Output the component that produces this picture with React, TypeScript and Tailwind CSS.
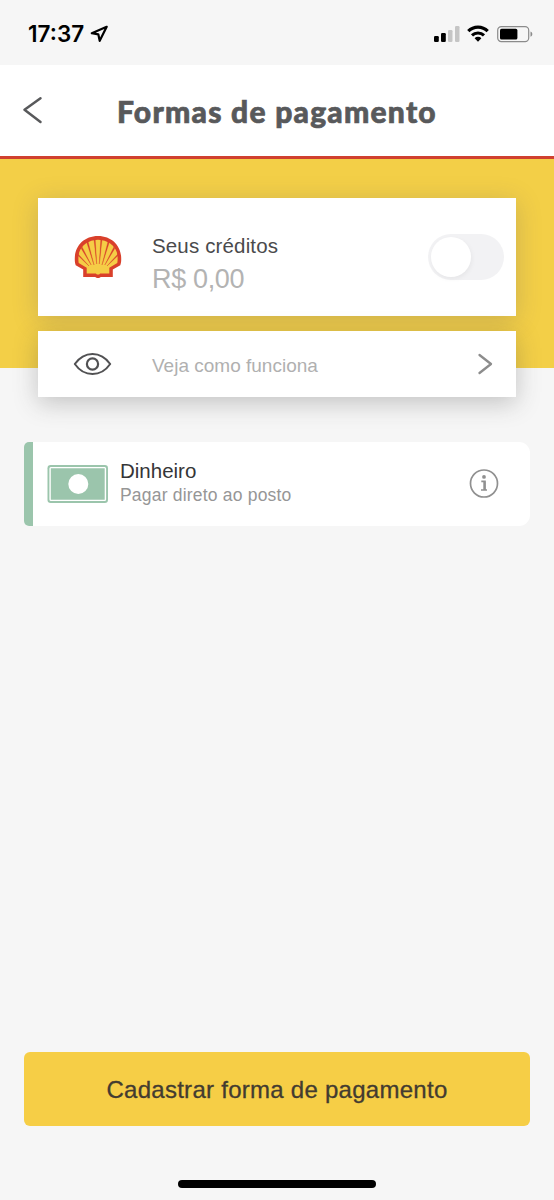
import React, { useState } from 'react';

const StatusBar: React.FC = () => (
  <div className="flex h-[65px] shrink-0 items-start bg-[#f6f6f6] pl-[28px] pr-[21px] pt-[22px] text-black">
    <span className="w-[58px] whitespace-nowrap font-['Inter',sans-serif] text-[22.5px] font-semibold leading-6">
      17:37
    </span>
    <svg className="ml-[4px] mt-[3px] h-[18px] w-[19px]" viewBox="0 0 19 18" fill="none">
      <path d="M16.7 1.8 1.8 8.2 8.3 9.3 9.7 15.8Z" stroke="currentColor" strokeWidth="2.2" strokeLinejoin="round" />
    </svg>
    <div className="ml-auto flex items-start pt-[3px]">
      <svg className="h-[18px] w-[27px]" viewBox="0 0 27 18">
        <rect x="1" y="11" width="4.8" height="6" rx="1.2" />
        <rect x="8" y="8" width="4.8" height="9" rx="1.2" />
        <rect x="15" y="5" width="4.5" height="12" rx="1.2" fill="#c5c5c5" />
        <rect x="22" y="1" width="4.5" height="16" rx="1.2" fill="#c5c5c5" />
      </svg>
      <svg className="ml-[7px] h-[17px] w-[22px]" viewBox="0 0 22 17" fill="none">
        <path d="M1.3 6.2a13.6 13.6 0 0 1 19.4 0" stroke="currentColor" strokeWidth="3.2" />
        <path d="M5 10.4a8.4 8.4 0 0 1 12 0" stroke="currentColor" strokeWidth="3" />
        <path d="M7.6 13.2a4.7 4.7 0 0 1 6.8 0L11 16.7Z" fill="currentColor" />
      </svg>
      <svg className="ml-[8px] h-[18px] w-[36px]" viewBox="0 0 36 18">
        <rect x="0.7" y="1.6" width="31" height="15" rx="3.6" fill="none" stroke="#8b8b8b" strokeWidth="1.2" />
        <rect x="3" y="3.8" width="17.4" height="10.8" rx="1.6" />
        <path d="M33.5 6.5c2.4.8 2.4 4.4 0 5.2Z" fill="#8b8b8b" />
      </svg>
    </div>
  </div>
);

const Header: React.FC = () => (
  <header className="flex h-[94px] shrink-0 items-start border-b-[3px] border-[#d0402f] bg-white pl-[22px] pt-[31px]">
    <button aria-label="Voltar">
      <svg className="h-[28px] w-[22px]" viewBox="0 0 22 28" fill="none">
        <path d="M18.5 2.3 2.5 13.8 18.5 26" stroke="#58595b" strokeWidth="2.5" strokeLinecap="round" strokeLinejoin="round" />
      </svg>
    </button>
    <h1 className="-mt-px ml-[73px] whitespace-nowrap font-['Lato',sans-serif] text-[30px] font-black leading-8 tracking-[1.25px] text-[#58595b] [-webkit-text-stroke:0.7px_#58595b]">
      Formas de pagamento
    </h1>
  </header>
);

const ShellLogo: React.FC = () => (
  <svg className="-mt-px h-[44px] w-[48px]" viewBox="0 0 48 44">
    <path
      d="M24 1C10 1 1 11 .8 23c-.1 3 .1 5.3.9 7.2L9.2 34.5V42h12.2c.8 1.4 4.4 1.4 5.2 0h12.2v-7.5l7.5-4.3c.8-1.9 1-4.2.9-7.2C47 11 38 1 24 1Z"
      fill="#d9402b"
    />
    <path
      d="M24 4.8 20 5.2l-2.6.6-5 2.3-3 2.5-3 4-1.3 3L4.4 22v3.4l.3 2.6 8 4.8v5.6h9.2l1 1.1h2.2l1-1.1h9.2v-5.6l8-4.8.3-2.6V22l-.7-4.4-1.3-3-3-4-3-2.5-5-2.3L28 5.2Z"
      fill="#f5cd46"
    />
    <path
      d="M20 4.5 22.7 29 21.2 4.5ZM28 4.5 25.3 29 26.8 4.5ZM12.8 7.5 20 30 14 6.5ZM35.2 7.5 28 30 34 6.5ZM7.2 13.4 17.2 30 8.2 12.2ZM40.8 13.4 30.8 30 39.8 12.2ZM4 20.6 15 31 4.5 19.4ZM44 20.6 33 31 43.5 19.4Z"
      fill="#d9402b"
      stroke="#d9402b"
      strokeWidth=".35"
    />
  </svg>
);

interface ToggleProps {
  checked: boolean;
  onChange: (checked: boolean) => void;
}

const Toggle: React.FC<ToggleProps> = ({ checked, onChange }) => (
  <button
    role="switch"
    aria-checked={checked}
    aria-label="Seus créditos"
    onClick={() => onChange(!checked)}
    className={`flex h-[46px] w-[76px] items-center rounded-full px-[3px] ${
      checked ? 'justify-end bg-[#9bc5ac]' : 'bg-[#f2f2f4]'
    }`}
  >
    <span className="h-[40px] w-[40px] rounded-full bg-white shadow-[1px_2px_5px_rgba(0,0,0,0.05)]" />
  </button>
);

const CreditsCard: React.FC = () => {
  const [enabled, setEnabled] = useState(false);

  return (
    <div className="flex h-[118px] items-center bg-white pl-[36px] pr-[12px] shadow-[0_4px_24px_rgba(70,70,110,0.22)]">
      <ShellLogo />
      <div className="ml-[30px] flex flex-col pt-[15px]">
        <span className="whitespace-nowrap text-[20.5px] leading-[24px] tracking-[0.15px] text-[#4a4a4c]">
          Seus créditos
        </span>
        <span className="mt-[5px] whitespace-nowrap text-[27px] leading-8 tracking-[-0.35px] text-[#b3b3b3]">
          R$ 0,00
        </span>
      </div>
      <div className="ml-auto">
        <Toggle checked={enabled} onChange={setEnabled} />
      </div>
    </div>
  );
};

const HowItWorks: React.FC = () => (
  <button className="mt-[15px] flex h-[66px] w-full items-center bg-white pl-[35px] pr-[23px] text-left shadow-[0_6px_24px_rgba(60,60,60,0.28)]">
    <svg className="h-[24px] w-[40px]" viewBox="0 0 40 24" fill="none" stroke="#515153" strokeWidth="2">
      <path d="M1.8 12C6 6 12.5 1.9 19.5 1.9S33 6 37.2 12C33 18 26.5 22.1 19.5 22.1S6 18 1.8 12Z" strokeLinejoin="round" />
      <circle cx="19.5" cy="12" r="5.6" strokeWidth="2.2" />
    </svg>
    <span className="ml-[39px] mt-[3px] whitespace-nowrap text-[19px] leading-6 text-[#b0b0b0]">
      Veja como funciona
    </span>
    <svg className="ml-auto h-[22px] w-[16px]" viewBox="0 0 16 22" fill="none">
      <path d="M2.5 2 14 11 2.5 20" stroke="#8c8c8c" strokeWidth="2.3" strokeLinecap="round" strokeLinejoin="round" />
    </svg>
  </button>
);

const CashMethod: React.FC = () => (
  <div className="mx-[24px] mt-[74px] flex h-[84px] shrink-0 overflow-hidden rounded-l-[5px] rounded-r-[11px] bg-white pr-[31px]">
    <div className="w-[9px] bg-[#9bc5ac]" />
    <svg className="ml-[14px] mt-[22px] h-[40px] w-[62px]" viewBox="0 0 62 40">
      <rect x="0.5" y="1" width="60.5" height="38" rx="3.2" fill="#9bc5ac" />
      <rect x="3.1" y="3.6" width="55.3" height="32.8" rx="0.8" fill="none" stroke="#fff" strokeWidth="1.4" />
      <circle cx="31.3" cy="20" r="10" fill="#fff" />
    </svg>
    <div className="ml-[11px] flex flex-col pt-[17px]">
      <span className="whitespace-nowrap text-[20.5px] leading-6 text-[#353537]">Dinheiro</span>
      <span className="whitespace-nowrap text-[17.5px] leading-6 tracking-[0.2px] text-[#969696]">
        Pagar direto ao posto
      </span>
    </div>
    <button aria-label="Informações" className="ml-auto self-center">
      <svg className="h-[30px] w-[30px]" viewBox="0 0 30 30" fill="none">
        <circle cx="15" cy="14.5" r="13.5" stroke="#909090" strokeWidth="1.7" />
        <circle cx="15" cy="7.9" r="1.9" fill="#909090" />
        <path d="M12.3 12.4H16v8.4M12 21h6" stroke="#909090" strokeWidth="1.6" />
        <path d="M15.4 12.4V21" stroke="#909090" strokeWidth="2.2" />
      </svg>
    </button>
  </div>
);

export default function App() {
  return (
    <div className="flex h-[1200px] w-full flex-col overflow-hidden bg-[#f6f6f6] font-['Liberation_Sans',Arial,sans-serif]">
      <StatusBar />
      <Header />
      <section className="h-[209px] shrink-0 bg-[#f3cf47] pl-[38px] pr-[38px] pt-[39px]">
        <CreditsCard />
        <HowItWorks />
      </section>
      <CashMethod />
      <button className="mx-[24px] mt-auto h-[74px] shrink-0 whitespace-nowrap rounded-[6px] bg-[#f6ce46] pt-[2px] text-[24px] tracking-[0.27px] text-[#433b30] [-webkit-text-stroke:0.3px_#433b30]">
        Cadastrar forma de pagamento
      </button>
      <div className="mb-[12px] mt-[54px] h-[8px] w-[198px] shrink-0 self-center rounded-full bg-black" />
    </div>
  );
}
